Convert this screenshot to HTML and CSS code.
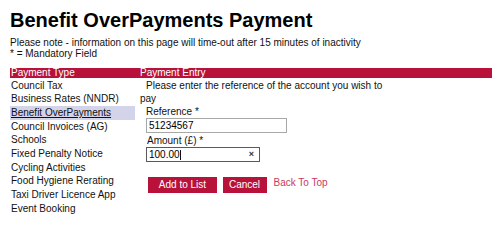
FILE: index.html
```html
<!DOCTYPE html>
<html lang="en">
<head>
<meta charset="utf-8">
<title>Benefit OverPayments Payment</title>
<link rel="stylesheet" href="styles.css">
</head>
<body>
<div class="page">
  <h1 class="title">Benefit OverPayments Payment</h1>
  <div class="note">
    <div>Please note - information on this page will time-out after 15 minutes of inactivity</div>
    <div>* = Mandatory Field</div>
  </div>
  <div class="panel">
    <div class="bar">
      <div class="bar-left">Payment Type</div>
      <div class="bar-right">Payment Entry</div>
    </div>
    <div class="body">
      <ul class="types">
        <li>Council Tax</li>
        <li>Business Rates (NNDR)</li>
        <li class="active"><span>Benefit OverPayments</span></li>
        <li>Council Invoices (AG)</li>
        <li>Schools</li>
        <li>Fixed Penalty Notice</li>
        <li>Cycling Activities</li>
        <li>Food Hygiene Rerating</li>
        <li>Taxi Driver Licence App</li>
        <li>Event Booking</li>
      </ul>
      <div class="entry">
        <p class="intro">Please enter the reference of the account you wish to pay</p>
        <div class="form">
          <div class="label">Reference *</div>
          <div class="field field-ref">51234567</div>
          <div class="label label-amount">Amount (£) *</div>
          <div class="field field-amount focused">
            <span class="val">100.00</span><span class="caret"></span>
            <span class="clear">×</span>
          </div>
          <div class="actions">
            <button class="btn btn-add" type="button">Add to List</button>
            <button class="btn btn-cancel" type="button">Cancel</button>
            <a class="top-link" href="#">Back To Top</a>
          </div>
        </div>
      </div>
    </div>
  </div>
</div>
</body>
</html>
```

FILE: styles.css
```css
* { box-sizing: border-box; }
html, body { margin: 0; padding: 0; background: #fff; }
body {
  font-family: "Liberation Sans", Arial, sans-serif;
  font-size: 10px;
  color: #111;
}
.page {
  padding: 9px 8px 0 10px;
  width: 500px;
}
.title {
  margin: 0;
  font-size: 20px;
  line-height: 23px;
  font-weight: bold;
  color: #000;
}
.note {
  margin-top: 5px;
  line-height: 11px;
  color: #111;
}
.panel { margin-top: 9px; }
.bar {
  display: flex;
  height: 10px;
  line-height: 10.5px;
  background: #b8123a;
  color: #fff;
}
.bar-left { width: 130px; padding-left: 1px; }
.bar-right { flex: 1; }
.body {
  display: flex;
  padding-top: 0.5px;
}
.types {
  list-style: none;
  margin: 0;
  padding: 0;
  width: 130px;
}
.types li {
  line-height: 13.7px;
  height: 13.7px;
  padding-left: 1px;
  margin-right: 5px;
  white-space: nowrap;
}
.types li.active {
  background: #d3d3e9;
}
.types li.active span {
  text-decoration: underline;
}
.entry { width: 250px; }
.intro {
  margin: 0;
  line-height: 13.7px;
  text-indent: 6px;
}
.form { padding-left: 6px; }
.label {
  line-height: 12px;
}
.label-amount {
  margin-top: 2.5px;
  padding-left: 1px;
}
.field {
  height: 15px;
  border: 1px solid #a8a8a8;
  line-height: 13px;
  padding-left: 2px;
  color: #000;
  background: #fff;
}
.field-ref { width: 141px; }
.field-amount {
  width: 114px;
  display: flex;
  align-items: center;
  position: relative;
  border-color: #5a5a5a;
}
.caret {
  display: inline-block;
  width: 1px;
  height: 10px;
  background: #111;
  margin-left: 0.5px;
}
.clear {
  position: absolute;
  right: 5px;
  top: 0;
  font-size: 9px;
  font-weight: bold;
  line-height: 13px;
  color: #333;
}
.actions {
  display: flex;
  align-items: flex-start;
  margin-top: 15px;
  padding-left: 2px;
  gap: 5.5px;
}
.btn {
  height: 16px;
  line-height: 16px;
  border: 0;
  margin: 0;
  background: #b8123a;
  color: #fff;
  font-family: "Liberation Sans", Arial, sans-serif;
  font-size: 10px;
  padding: 0;
  text-align: center;
}
.btn-add { width: 69px; }
.btn-cancel { width: 44px; }
.top-link {
  margin-left: 1.5px;
  line-height: 11px;
  color: #c83a62;
  text-decoration: none;
}
```
